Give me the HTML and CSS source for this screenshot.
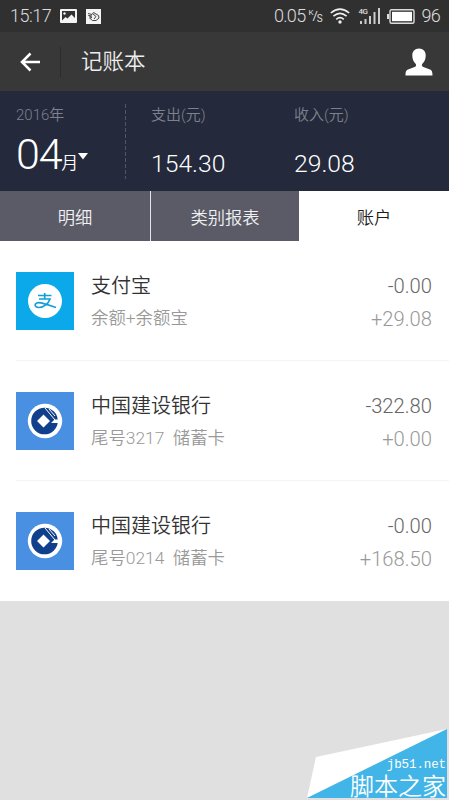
FILE: index.html
```html
<!DOCTYPE html>
<html lang="zh-CN">
<head>
<meta charset="utf-8">
<title>记账本</title>
<link rel="stylesheet" href="styles.css">
</head>
<body>
<div class="status">
  <span class="clock">15:17</span>
  <svg class="st-photo" width="17" height="14" viewBox="0 0 17 14"><rect width="17" height="14" rx="1" fill="#f4f4f4"/><path d="M2 11.500V2H15V9L11.500 5.500 7.500 9.500 5.500 8z" fill="#333"/><circle cx="4.500" cy="4.500" r="1.200" fill="#f4f4f4"/></svg>
  <svg class="st-app" width="15" height="15" viewBox="0 0 15 15"><rect width="15" height="15" fill="#f4f4f4"/><path d="M2 4.500 6 5.500 7.500 3.500 12.500 6.500 13 9 10 11.500H6.500L3.500 9 6 8.500 2.500 6.500 6 7M7 5l3 2.500L8 10" fill="none" stroke="#444" stroke-width="1"/></svg>
  <span class="speed">0.05</span>
  <span class="unit"><span class="unit-k">K</span><span class="unit-slash">/</span><span class="unit-s">S</span></span>
  <svg class="st-wifi" width="20" height="16" viewBox="0 0 20 16"><g fill="none" stroke="#eee" stroke-width="1.600"><path d="M.8 5Q10-2.800 19.200 5M3.400 8.200Q10 2.600 16.600 8.200M6.200 11.300Q10 8 13.800 11.300"/></g><circle cx="10" cy="14" r="1.700" fill="#eee"/></svg>
  <span class="signal"><svg width="21" height="16" viewBox="0 0 21 16"><path d="M1 13h2v3H1zM5.500 11h2v5h-2zM10 8h2v8h-2zM14.500 4h2v12h-2zM19 0h2v16h-2z" fill="#ccc"/></svg><span class="net">4G</span></span>
  <svg class="st-batt" width="28" height="15" viewBox="0 0 28 15"><rect x="3" y=".8" width="24" height="13.400" rx="1.500" fill="none" stroke="#ddd" stroke-width="1.400"/><rect x="5" y="2.800" width="20" height="9.400" fill="#fff"/><path d="M0 5h2v5H0z" fill="#ddd"/></svg>
  <span class="percent">96</span>
</div>
<header class="bar">
  <svg class="back" width="20" height="20" viewBox="0 0 20 20"><path d="M10.500 1.500 2 10l8.500 8.500M2 10h18" fill="none" stroke="#fff" stroke-width="2.500"/></svg>
  <h1>记账本</h1>
  <svg class="user" width="28" height="28" viewBox="0 0 28 28"><path d="M14 .5C9.800.500 7.200 3.500 7.300 7.500c0 4 1.500 6.500 3.300 8.300 1 1.200.4 2.700-1 3.300L3 21.500C1.200 22.200.5 23.500.5 27.500h27c0-4-.7-5.300-2.500-6l-6.600-2.400c-1.400-.6-2-2.100-1-3.300 1.800-1.800 3.300-4.300 3.300-8.300C20.800 3.500 18.200.500 14 .5z" fill="#fff"/></svg>
</header>
<section class="summary">
  <div class="period">
    <div class="label">2016年</div>
    <div class="month"><span class="num">04</span><span class="yue">月</span><svg class="caret" width="10" height="7" viewBox="0 0 10 7"><path d="M0 0h10L5 6.500z" fill="#fff"/></svg></div>
  </div>
  <svg class="dash" width="1" height="75" viewBox="0 0 1 75"><path d="M.5 0v75" stroke="#50566b" stroke-dasharray="4 2"/></svg>
  <div class="total out"><div class="label">支出(元)</div><div class="value">154.30</div></div>
  <div class="total"><div class="label">收入(元)</div><div class="value">29.08</div></div>
</section>
<nav class="tabs"><span class="tab">明细</span><span class="tab">类别报表</span><span class="tab active">账户</span></nav>
<main>
  <article class="row">
    <div class="logo alipay"><svg width="58" height="58" viewBox="0 0 58 58"><circle cx="29" cy="29" r="17" fill="#fff"/><g fill="none" stroke="#129fd8" stroke-width="1.700"><path d="M22 23.500H35.500M28.700 21v6M23 27H34C32.500 31.500 28 35.500 23 35.500c-3.500 0-4.500-2-3.500-3.500 2.500-3 8-.5 20.500 3.500"/></g></svg></div>
    <div class="info"><div class="name">支付宝</div><div class="sub">余额+余额宝</div></div>
    <div class="money"><div class="minus">-0.00</div><div class="plus">+29.08</div></div>
  </article>
  <article class="row">
    <div class="logo ccb"><svg width="58" height="58" viewBox="0 0 58 58"><circle cx="29" cy="29" r="17.200" fill="#fff"/><circle cx="28.500" cy="29" r="13.300" fill="#103f8c"/><path d="M35 31H44V27.500H38.500zM27.500 22.500 34 29l-6.500 6.500L21 29z" fill="#fff"/><path d="M29 16 39 28M33 17l6 7" stroke="#fff"/></svg></div>
    <div class="info"><div class="name">中国建设银行</div><div class="sub">尾号3217&nbsp; 储蓄卡</div></div>
    <div class="money"><div class="minus">-322.80</div><div class="plus">+0.00</div></div>
  </article>
  <article class="row">
    <div class="logo ccb"><svg width="58" height="58" viewBox="0 0 58 58"><circle cx="29" cy="29" r="17.200" fill="#fff"/><circle cx="28.500" cy="29" r="13.300" fill="#103f8c"/><path d="M35 31H44V27.500H38.500zM27.500 22.500 34 29l-6.500 6.500L21 29z" fill="#fff"/><path d="M29 16 39 28M33 17l6 7" stroke="#fff"/></svg></div>
    <div class="info"><div class="name">中国建设银行</div><div class="sub">尾号0214&nbsp; 储蓄卡</div></div>
    <div class="money"><div class="minus">-0.00</div><div class="plus">+168.50</div></div>
  </article>
</main>
<div class="stamp">
  <svg width="140" height="69" viewBox="0 0 140 69"><path d="M9 28 140 0 0 69z" fill="#fff"/><path d="M140 0v69H0z" fill="#42b5e8"/></svg>
  <div class="stamp-text"><div class="site">jb51.net</div><div class="site-name">脚本之家</div></div>
</div>
</body>
</html>
```
FILE: styles.css
```css
* { box-sizing: border-box; }
body {
  margin: 0;
  width: 449px;
  height: 800px;
  overflow: hidden;
  position: relative;
  background: #e0e0e0;
  font-family: Roboto, "Noto Sans CJK SC", sans-serif;
  white-space: nowrap;
}
svg { display: block; flex: none; }

.status {
  height: 32px;
  display: flex;
  align-items: center;
  padding: 0 9px 0 10px;
  background: #303030;
  color: #ddd;
  font-size: 18px;
  font-weight: 350;
  line-height: 32px;
}
.clock { width: 50px; letter-spacing: -0.5px; }
.st-app { margin-left: 9px; }
.speed { margin-left: auto; letter-spacing: -0.7px; }
.unit { display: flex; width: 14px; height: 16px; margin: 0 8px 0 3px; line-height: 10px; font-weight: 400; }
.unit-k { font-size: 8px; }
.unit-slash { font-size: 13px; line-height: 16px; margin-left: -1px; }
.unit-s { font-size: 10px; align-self: flex-end; margin-left: -1px; }
.signal { position: relative; margin-left: 9px; }
.net { position: absolute; left: -1px; top: 0; font-size: 8px; line-height: 8px; font-weight: 500; letter-spacing: -0.5px; }
.st-batt { margin: 0 6px 0 7px; }
.percent { letter-spacing: -0.7px; }

.bar {
  height: 59px;
  display: flex;
  align-items: center;
  padding: 0 16px 0 20px;
  background: #383838;
}
h1 {
  flex: 1;
  margin: 0 0 0 20px;
  padding-left: 20px;
  border-left: 1px solid #2c2c2c;
  color: #eee;
  font-size: 21.500px;
  font-weight: 350;
  line-height: 30px;
}

.summary {
  height: 100px;
  display: flex;
  align-items: flex-start;
  padding: 13px 0 0 16px;
  background: #24293b;
  color: #fff;
}
.period { width: 109px; }
.label { font-size: 15px; line-height: 22px; color: #7d818e; font-weight: 350; }
.month { display: flex; height: 54px; }
.num { font-size: 43px; line-height: 56px; font-weight: 300; letter-spacing: -1.200px; }
.yue { font-size: 17px; line-height: 75px; font-weight: 350; }
.caret { margin-top: 27px; }
.total { width: 143px; }
.total.out { margin-left: 25px; }
.value { font-size: 24.700px; line-height: 30px; margin-top: 23px; font-weight: 350; }

.tabs { height: 50px; display: grid; grid-template-columns: 151px 148px 150px; background: #fff; }
.tab {
  display: flex;
  justify-content: center;
  align-items: center;
  background: #5a5b67;
  color: #f0f0f2;
  font-size: 17.300px;
  font-weight: 350;
}
.tab:first-child { border-right: 1px solid #e4e4e8; }
.tab.active { background: #fff; color: #1c1c1c; }

main { background: #fff; padding-left: 16px; }
.row {
  height: 120px;
  display: flex;
  padding: 31px 17px 0 0;
  border-bottom: 1px solid #f4f4f4;
}
.row:last-child { border-bottom-color: #fff; }
.logo { width: 58px; height: 58px; }
.alipay { background: #0ca9ea; }
.ccb { background: #4990e2; }
.info { margin-left: 17px; flex: 1; }
.name { font-size: 20px; line-height: 28px; color: #333; font-weight: 350; }
.sub { font-size: 17.400px; line-height: 26px; margin-top: 5px; color: #999; font-weight: 350; }
.money { text-align: right; font-size: 20.200px; line-height: 28px; font-weight: 350; }
.minus { color: #666; }
.plus { color: #999; margin-top: 5px; }

.stamp { position: absolute; left: 307px; top: 729px; width: 140px; height: 69px; }
.stamp-text { position: absolute; right: 1px; top: 28px; color: #fff; text-align: right; }
.site { font: 12.500px/16px "Liberation Mono", monospace; letter-spacing: -0.100px; }
.site-name { font-size: 24px; line-height: 24px; margin-top: 2px; font-weight: 350; }
```
